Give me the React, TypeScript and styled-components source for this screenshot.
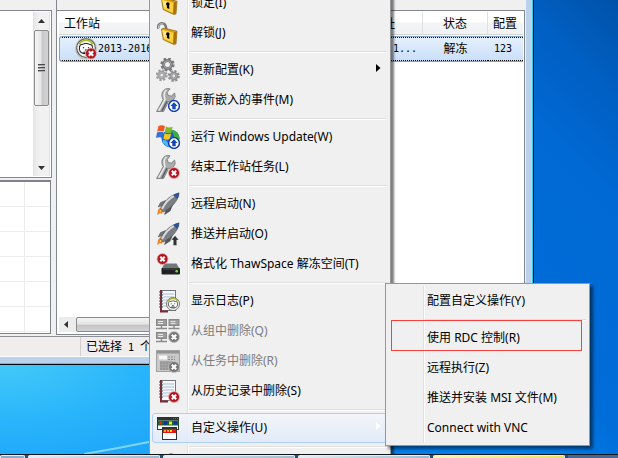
import React from "react";
import styled, { createGlobalStyle, css } from "styled-components";

const GlobalStyle = createGlobalStyle`
  *, *::before, *::after { box-sizing: border-box; }
  html, body { margin: 0; padding: 0; }
  body { overflow: hidden; }
  button { font: inherit; color: inherit; }
`;

const listFont = `"DejaVu Sans Mono", "Noto Sans CJK SC", monospace`;
const menuFont = `"Noto Sans CJK SC", "Noto Sans", sans-serif`;

/* ---------- desktop ---------- */

const Desktop = styled.div`
  position: relative;
  display: flex;
  flex-direction: column;
  height: 100vh;
  overflow: hidden;
  background:
    radial-gradient(ellipse 420px 190px at 0 78%, #45cbf8 0%, #28b4fb 35%, #1a9ff8 70%, rgba(18, 150, 245, 0) 100%),
    linear-gradient(225deg, #0052a8 0%, #005ec0 8%, #0069d4 19%, #006dd8 40%, #0080ee 50%);
`;

const Streak = styled.svg`
  position: absolute;
  left: 84px;
  bottom: 3px;
  width: 70px;
  height: 16px;
`;

const Taskbar = styled.div`
  position: relative;
  z-index: 3;
  display: flex;
  gap: 3px;
  height: 4px;
  border-top: 1px solid #10151c;
  background: #24506e;
`;

const Task = styled.div<{ $tone?: "plain" | "active" | "cut" }>`
  flex: 0 0 ${(p) => (p.$tone === "cut" ? "25px" : "132px")};
  border: 1px solid #e4f0f6;
  border-bottom: 0;
  border-radius: 2px 2px 0 0;
  background: ${(p) =>
    p.$tone === "active"
      ? "linear-gradient(90deg, #fbf6b0, #ecdf5c)"
      : p.$tone === "cut"
        ? "#86aec6"
        : "linear-gradient(90deg, #e8eef2, #9dbacb)"};
`;

const TaskRest = styled.div`
  flex: 1;
  background: #44688f;
`;

/* ---------- console window ---------- */

const Window = styled.div`
  flex: 1;
  min-height: 0;
  display: flex;
  flex-direction: column;
  margin: 0 86px 91px 0;
  border: solid #b9d1ea;
  border-width: 0 6px 6px 0;
  outline: 1px solid #2fd3ee;
  box-shadow: 0 0 0 2px #05080c;
  background: #f0f0f0;
  font: 12px/14px ${listFont};
  color: #000;
`;

const Panes = styled.div`
  flex: 1;
  min-height: 0;
  display: flex;
  gap: 4px;
`;

const SideColumn = styled.div`
  flex: 0 0 52px;
  display: flex;
  flex-direction: column;
  gap: 2px;
  padding: 10px 0 2px;
`;

const TreePane = styled.div`
  flex: 1;
  display: flex;
  justify-content: flex-end;
  padding: 1px;
  border: solid #828790;
  border-width: 1px 1px 1px 0;
  background: #fff;
`;

const GridPane = styled.div`
  flex: 0 0 154px;
  margin-right: 1px;
  border: solid #7d828b;
  border-width: 2px 1px 1px 0;
  background:
    linear-gradient(#ececec, #ececec) 24px 0 / 1px 100% no-repeat,
    repeating-linear-gradient(#fff 0 24px, #ececec 24px 25px);
`;

const ListColumn = styled.div`
  flex: 1;
  min-width: 0;
  display: flex;
  flex-direction: column;
  padding: 0 1px 1px 0;
`;

const ListTop = styled.div`
  height: 10px;
  border-left: 1px solid #828790;
`;

const ListPane = styled.div`
  flex: 1;
  display: flex;
  flex-direction: column;
  justify-content: space-between;
  padding: 1px 1px 2px 2px;
  border: 1px solid #828790;
  background: #fff;
`;

const VScroll = styled.div`
  display: flex;
  flex-direction: column;
  align-items: center;
  width: 17px;
  padding: 7px 0 6px;
  border: solid #e3e3e3;
  border-width: 0 1px;
  background: linear-gradient(90deg, #e8e8e8, #f1f1f1 40%, #f1f1f1);
`;

const VThumb = styled.div`
  display: flex;
  flex-direction: column;
  align-items: center;
  justify-content: center;
  gap: 1px;
  width: 15px;
  height: 76px;
  margin: 7px 0 auto;
  border: 1px solid #8b8b8b;
  border-radius: 2px;
  background: linear-gradient(90deg, #f5f5f5, #e6e6e6 45%, #c8c8cb 55%, #d4d4d6);
`;

const Grip = styled.i`
  width: 7px;
  height: 2px;
  border-top: 1px solid #4a4a4a;
  background: #aaa;
`;

const HScroll = styled.div`
  display: flex;
  align-items: center;
  gap: 8px;
  height: 15px;
  padding: 0 30px 0 5px;
  background: #ececec;
`;

const HThumb = styled.div`
  flex: 1;
  height: 15px;
  border: 1px solid #8b8b8b;
  border-radius: 2px;
  background: linear-gradient(#f5f5f5, #e2e2e2 48%, #c4c4c6 55%, #d4d4d6);
`;

const StationTable = styled.table`
  width: 100%;
  table-layout: fixed;
  border-collapse: separate;
  border-spacing: 0;
`;

const HeadCell = styled.th<{ $align?: string }>`
  height: 23px;
  padding: 1px 5px 0;
  text-align: ${(p) => p.$align || "left"};
  font-weight: 400;
  white-space: nowrap;
  border-right: 1px solid #dfe0e3;
  border-bottom: 1px solid #d5d5d5;
  background: linear-gradient(#fff 45%, #f3f4f5 50%, #f1f2f4);
  &:nth-child(2) { padding-right: 27px; }
  &:last-child { border-right: 0; }
`;

const Spacer = styled.tr`
  height: 1px;
`;

const BodyCell = styled.td<{ $align?: string }>`
  height: 25px;
  padding: 0 6px;
  text-align: ${(p) => p.$align || "left"};
  white-space: nowrap;
  font-size: ${(p) => (p.$align === "center" ? "12px" : "10px")};
  border: solid #7da2ce;
  border-width: 1px 0;
  background:
    repeating-linear-gradient(90deg, #000 0 1px, transparent 1px 2px) 0 0 / 100% 1px no-repeat,
    repeating-linear-gradient(90deg, #000 0 1px, transparent 1px 2px) 0 100% / 100% 1px no-repeat,
    linear-gradient(#e6f0fc, #c9dffa);
  &:first-child { border-left-width: 1px; border-radius: 3px 0 0 3px; }
`;

const Station = styled.div`
  display: flex;
  align-items: center;
  padding-left: 8px;
`;

const StatusBar = styled.div`
  display: flex;
  height: 21px;
  border-top: 1px solid #8b9096;
  border-bottom: 1px solid #fff;
  background: #f1edec;
`;

const StatusText = styled.div`
  margin-left: 80px;
  padding: 3px 5px;
  border-left: 1px solid #d2cecd;
  white-space: pre;
`;

const Count = styled.span`
  font-size: 10px;
`;

/* ---------- menus ---------- */

const Menu = styled.div<{ $sub?: boolean }>`
  position: absolute;
  z-index: ${(p) => (p.$sub ? 4 : 2)};
  left: ${(p) => (p.$sub ? 385 : 149)}px;
  top: ${(p) => (p.$sub ? 283 : -15)}px;
  width: ${(p) => (p.$sub ? 205 : 242)}px;
  padding: 2px;
  border: 1px solid #979797;
  background:
    linear-gradient(90deg, #e0e1e1 50%, #fff 50%) 37px 2px / 2px calc(100% - 4px) no-repeat,
    #f0f0f0;
  box-shadow: ${(p) => (p.$sub ? "3px 3px 3px" : "3px 2px 2px")} rgba(0, 0, 0, 0.5);
  font: 12px/16px ${menuFont};
  color: #000;
`;

const Item = styled.button<{ $open?: boolean }>`
  display: flex;
  align-items: center;
  width: 100%;
  height: 30px;
  padding: 0 6px 0 3px;
  border: 1px solid transparent;
  border-radius: 3px;
  background: none;
  text-align: left;
  white-space: pre;
  &:disabled { color: #7c7c7c; }
  ${(p) =>
    p.$open &&
    css`
      border-color: #aecff7;
      background: linear-gradient(rgba(243, 246, 251, 0.8), rgba(222, 234, 250, 0.8));
    `}
`;

const IconBox = styled.span`
  flex: 0 0 24px;
  height: 24px;
  margin-right: 11px;
  svg { display: block; }
`;

const Label = styled.span`
  flex: 1;
  padding-bottom: 2px;
`;

const Latin = styled.span`
  font-family: "Noto Sans", sans-serif;
`;

const ArrowSlot = styled.span`
  padding-bottom: 4px;
  svg { display: block; }
`;

const Rule = styled.hr`
  height: 2px;
  margin: 3px 1px 2px 37px;
  border: 0;
  border-top: 1px solid #dedede;
  background: #fff;
`;

const NextIcon = styled.div`
  height: 5px;
  padding: 2px 0 0 14px;
  svg { display: block; }
`;

const Highlight = styled.div`
  position: absolute;
  z-index: 5;
  left: 391px;
  top: 320px;
  width: 191px;
  height: 31px;
  border: 1px solid #f8403c;
  pointer-events: none;
`;

/* ---------- drawings ---------- */

function Arrow({ dir, color = "#000" }: { dir: "up" | "down" | "left" | "right"; color?: string }) {
  const d = {
    up: "M0 4 L3.5 0 L7 4Z",
    down: "M0 0 L7 0 L3.5 4Z",
    left: "M4 0 L4 7 L0 3.5Z",
    right: "M0 0 L4.5 4 L0 8Z",
  }[dir];
  const [w, h] = dir === "right" ? [5, 8] : dir === "left" ? [4, 7] : [7, 4];
  return (
    <svg width={w} height={h} viewBox={`0 0 ${w} ${h}`}>
      <path d={d} fill={color} />
    </svg>
  );
}

const Cross = ({ x = 18, y = 18, gray = false }) => (
  <g transform={`translate(${x} ${y})`}>
    <circle r="5.5" fill={gray ? "#777" : "#b3151f"} stroke={gray ? "#c4c4c4" : "#e9b9bb"} strokeWidth=".8" />
    <path d="M-2.2-2.2 2.2 2.2M2.2-2.2-2.2 2.2" stroke="#fff" strokeWidth="2.1" />
  </g>
);

const UpBadge = () => (
  <g transform="translate(18 18)">
    <circle r="5.4" fill="#fff" stroke="#133fa8" strokeWidth="1.5" />
    <path d="M0-3.8 3.6 0H1.7V3.2H-1.7V0H-3.6Z" fill="#1746b8" />
  </g>
);

const Bear = ({ x = 17, y = 15, r = 6.5 }) => (
  <g transform={`translate(${x} ${y}) scale(${r / 6.5})`}>
    <circle r="6.5" fill="#f4f4f0" stroke="#5c5c58" strokeWidth=".8" />
    <path d="M-4.8-2.6A5.4 5.4 0 0 1 4.8-2.6" stroke="#a8b82a" strokeWidth="1.3" fill="none" />
    <path d="M-4.6 1C-4.8-2-3.8-2.4-2.8-2.4Q0-4 2.8-2.4C3.8-2.4 4.8-2 4.6 1 4 5-4 5-4.6 1Z" fill="#fff" stroke="#222" strokeWidth=".7" />
    <path d="M-2.2-.2h.9M1.3-.2h.9M-.8 1.4h1.6M-1.8 3h3.6" stroke="#111" strokeWidth=".8" />
  </g>
);

const Wrench = () => (
  <g>
    <path
      d="M.6 23.5 7.2 11.5C4.6 7.5 5.7 1.8 11.2.4L14 .8 11.2 4.4 12.3 7.6 15.5 8 18.6 5 19.2 8.6C17.8 12.6 14.9 13.8 12.5 13.4L7.6 23.5Z"
      fill="#a9abad"
      stroke="#707274"
      strokeWidth=".8"
    />
    <path d="M2.8 22.7 9 11.5C7.6 7.5 7.8 4 10.5 2" fill="none" stroke="#ececec" strokeWidth="1.5" />
    <path d="M6 22.8 11 13" stroke="#5f6265" strokeWidth="1.5" />
  </g>
);

const Rocket = () => (
  <g>
    <path d="M1.2 23 2.2 17.6 5 15 9 19 6.5 20.5 5.4 22 4.4 20.7Z" fill="#f57c22" />
    <path d="M3.5 20 5 16.5 7 18.5Z" fill="#ffdf66" />
    <path d="M9.5 8.5 4.5 10.5 2.2 15 8 13.2Z" fill="#74787d" stroke="#4c5055" strokeWidth=".5" />
    <path d="M16.5 13.2 14 19 8.6 22.5 10.6 16.3Z" fill="#54585d" stroke="#34383d" strokeWidth=".5" />
    <path d="M4.5 17.5C7 10 13.5 3.5 22.8 1 22.8 8.5 15 16.5 7.4 19.8Z" fill="#7b7f84" stroke="#484c50" strokeWidth=".6" />
    <path d="M6 17C9 10.8 13 6.5 18 3.8" fill="none" stroke="#d9dcde" strokeWidth="2" />
    <path d="M17 3.1Q20 1.2 23.3.6 23.4 4 21.4 7.2Z" fill="#2f5598" />
  </g>
);

const Journal = () => (
  <g>
    <rect x="4.5" y="1.5" width="15" height="20" fill="#f6f8fb" stroke="#73777c" />
    <path d="M7 5h11M7 8h11M7 11h11M7 14h11M7 17h11" stroke="#a9bad3" />
    <path d="M5 1V22.5H12" fill="none" stroke="#832832" strokeWidth="2" />
    <path d="M3 3h4M3 6h4M3 9h4M3 12h4M3 15h4M3 18h4" stroke="#444a52" strokeWidth="1" />
  </g>
);

const Padlock = ({ open = false }) => (
  <g>
    <path
      d={open ? "M2.6 7.5C1 4 4.8 1.3 7.6 2.6 10 3.8 10.3 6 10.3 9" : "M9 10C8 5 10 2 14 3 17 4 17 8 17 11"}
      fill="none"
      stroke="#77797c"
      strokeWidth="2.6"
    />
    <path d={open ? "M2.6 7C1.8 4 4.6 2 7.4 3" : "M9 9C8.5 5 10 3 13 3.3"} fill="none" stroke="#cfd1d3" strokeWidth="1" />
    <path d="M5.5 8 8.5 7.2 21 10.2 20 23 17.6 23.4 7.2 18.6Z" fill="#dd9c0e" stroke="#876210" strokeWidth=".7" />
    <path d="M6.2 8.7 17.6 11.7 16.8 22 7.9 18Z" fill="#ffd33d" />
    <path d="M6.5 9.5 11 10.6 8.4 17.6Z" fill="#ffe98e" />
    <path d="M17.8 11.6 20.3 10.8 19.5 22.5 17.3 22.9Z" fill="#a96f05" />
    <circle cx="11.8" cy="13" r="1.8" />
    <path d="M11 13h2l.4 5-2.4-1Z" />
  </g>
);

const Gear = ({ x, y, r, c }: { x: number; y: number; r: number; c: string }) => (
  <g transform={`translate(${x} ${y})`} fill="none">
    <circle r={r} stroke={c} strokeWidth="2.2" strokeDasharray={`${r * 0.44} ${r * 0.345}`} />
    <circle r={r - 2} stroke={c} strokeWidth="3" />
    <circle r={r - 2.2} stroke="#c6c6c6" strokeWidth=".6" />
  </g>
);

const Computer = ({ x, y }: { x: number; y: number }) => (
  <g transform={`translate(${x} ${y})`}>
    <rect x=".5" y=".5" width="10" height="6" fill="#9c9c9c" stroke="#888" />
    <path d="M2 2.5h5M2 4.5h5" stroke="#e8e8e8" />
    <path d="M5.5 7v2M0 9.5h11" stroke="#8b8b8b" strokeWidth="1.4" />
  </g>
);

const drawings: Record<string, React.ReactNode> = {
  lock: <Padlock />,
  unlock: <Padlock open />,
  gears: (
    <>
      <Gear x={11.5} y={6.5} r={6} c="#747678" />
      <Gear x={5.7} y={17.2} r={4.9} c="#9b9d9f" />
      <Gear x={17.8} y={18} r={4.9} c="#8b8d8f" />
    </>
  ),
  wrenchUp: <><Wrench /><UpBadge /></>,
  windows: (
    <>
      <circle cx="14.5" cy="13.5" r="9" fill="#1668c9" />
      <path d="M15 5C20 5 24 9 23.5 14 20 15 18 13 18 10Z" fill="#3fae3b" />
      <path d="M7 15Q10 14 12 18L13 22Q8 20 6.5 17Z" fill="#52b3ee" />
      <path d="M2.5 1Q5.5-.5 9 1L7.8 6.6Q4.8 5.2 1.2 6.6Z" fill="#ea5a23" />
      <path d="M10 1.5Q13 3.4 16.7 1.8L15.2 7.6Q12 9 8.8 7Z" fill="#7dbb2a" />
      <path d="M1 7.6Q4.5 6 7.6 7.6L6.4 13Q3.2 11.6 0 13Z" fill="#3472d2" />
      <path d="M8.6 8Q11.6 10 15 8.6L13.8 14Q10.5 15.6 7.4 13.4Z" fill="#f8c421" />
      <UpBadge />
    </>
  ),
  wrenchStop: <><Wrench /><Cross /></>,
  rocket: <Rocket />,
  rocketUp: (
    <>
      <Rocket />
      <path d="M19 13.5 23 18H20.8V23.5H17.2V18H15Z" fill="#303236" stroke="#f0f0f0" strokeWidth=".5" />
    </>
  ),
  drive: (
    <>
      <path d="M8.5 11.5H20.5L23.8 17H5.5Z" fill="#74777a" />
      <rect x="5.5" y="16" width="18.5" height="6.5" rx="1.2" fill="#1f2123" />
      <path d="M7 17h15.5" stroke="#5c5f62" strokeWidth=".8" />
      <circle cx="20.7" cy="19.3" r="1.3" fill="#7be03a" />
      <Cross x={6.5} y={7} />
    </>
  ),
  log: <><Journal /><Bear /></>,
  group: (
    <>
      <Computer x={0} y={0} />
      <Computer x={12.5} y={0} />
      <Computer x={0} y={13} />
      <Cross gray />
    </>
  ),
  task: (
    <>
      <rect x=".5" y="1.5" width="23" height="21" fill="#c9c9c9" stroke="#a0a0a0" />
      <rect x="1" y="2" width="22" height="2.5" fill="#949494" />
      <rect x="3" y="6.5" width="8" height="4" fill="#f6f6f6" />
      <rect x="4" y="12" width="15" height="9" fill="#a4a4a4" />
      <path d="M12 8h7M12 10.5h7M4 14h15M4 17h10M4 20h9" stroke="#8a8a8a" strokeDasharray="2 1" />
      <Cross gray />
    </>
  ),
  history: <><Journal /><Cross /></>,
  custom: (
    <>
      <rect x="1.5" y="1.5" width="21" height="12" fill="#fff" stroke="#333" />
      <rect x="1" y="1" width="22" height="3.5" fill="#303030" />
      <path d="M17 2.5h1M19 2.5h1M21 2.5h1" stroke="#e33" />
      <rect x="2" y="4.5" width="21" height="5" fill="#13642f" />
      <path d="M3 5.5h3v3H3z" fill="#f11b17" />
      <path d="M8 5.5h3v3H8zM18 5.5h3v3H18z" fill="#1c28ae" />
      <path d="M13 5.5h3v3H13z" fill="#f3e611" />
      <rect x="6.5" y="11.5" width="14" height="12" fill="#fff" stroke="#333" />
      <rect x="6" y="11" width="15" height="2" fill="#303030" />
      <rect x="7" y="13" width="13" height="4" fill="#e8150f" />
      <path d="M8 14h2v2H8zM11 14h2v2h-2z" fill="#f7a414" />
      <path d="M14 14h2v2h-2z" fill="#f7df14" />
    </>
  ),
};

/* ---------- content ---------- */

type Entry = { label: string; icon?: string; arrow?: boolean; off?: boolean; open?: boolean } | null;

const mainEntries: Entry[] = [
  { label: "锁定(I)", icon: "lock" },
  { label: "解锁(J)", icon: "unlock" },
  null,
  { label: "更新配置(K)", icon: "gears", arrow: true },
  { label: "更新嵌入的事件(M)", icon: "wrenchUp" },
  null,
  { label: "运行 Windows Update(W)", icon: "windows" },
  { label: "结束工作站任务(L)", icon: "wrenchStop" },
  null,
  { label: "远程启动(N)", icon: "rocket" },
  { label: "推送并启动(O)", icon: "rocketUp" },
  { label: "格式化 ThawSpace 解冻空间(T)", icon: "drive" },
  null,
  { label: "显示日志(P)", icon: "log" },
  { label: "从组中删除(Q)", icon: "group", off: true },
  { label: "从任务中删除(R)", icon: "task", off: true },
  { label: "从历史记录中删除(S)", icon: "history" },
  null,
  { label: "自定义操作(U)", icon: "custom", arrow: true, open: true },
  null,
];

const subEntries: Entry[] = [
  { label: "配置自定义操作(Y)" },
  null,
  { label: "使用 RDC 控制(R)" },
  { label: "远程执行(Z)" },
  { label: "推送并安装 MSI 文件(M)" },
  { label: "Connect with VNC" },
];

function MenuLabel({ text }: { text: string }) {
  const parts = text.split(/([ -~]+)/).filter(Boolean);
  return (
    <Label>
      {parts.map((part, i) => (/^[ -~]/.test(part) ? <Latin key={i}>{part}</Latin> : part))}
    </Label>
  );
}

function Entries({ entries }: { entries: Entry[] }) {
  return (
    <>
      {entries.map((e, i) =>
        e === null ? (
          <Rule key={i} />
        ) : (
          <Item key={i} type="button" role="menuitem" disabled={e.off} $open={e.open}>
            <IconBox>
              {e.icon && (
                <svg width="24" height="24" viewBox="0 0 24 24">
                  {drawings[e.icon]}
                </svg>
              )}
            </IconBox>
            <MenuLabel text={e.label} />
            {e.arrow && (
              <ArrowSlot>
                <Arrow dir="right" color={e.open ? "#fff" : "#000"} />
              </ArrowSlot>
            )}
          </Item>
        ),
      )}
    </>
  );
}

export default function App() {
  return (
    <Desktop>
      <GlobalStyle />
      <Streak viewBox="0 0 70 16">
        <path d="M0 15Q36 9 70 2" fill="none" stroke="#7fd6fb" strokeWidth="2" />
      </Streak>

      <Window>
        <Panes>
          <SideColumn>
            <TreePane>
              <VScroll>
                <Arrow dir="up" color="#333" />
                <VThumb>
                  <Grip />
                  <Grip />
                  <Grip />
                </VThumb>
                <Arrow dir="down" color="#333" />
              </VScroll>
            </TreePane>
            <GridPane />
          </SideColumn>
          <ListColumn>
            <ListTop />
            <ListPane>
              <StationTable>
                <colgroup>
                  <col />
                  <col width="100" />
                  <col width="65" />
                  <col width="35" />
                </colgroup>
                <thead>
                  <tr>
                    <HeadCell>工作站</HeadCell>
                    <HeadCell $align="right">地址</HeadCell>
                    <HeadCell $align="center">状态</HeadCell>
                    <HeadCell>配置</HeadCell>
                  </tr>
                </thead>
                <tbody>
                  <Spacer />
                  <tr>
                    <BodyCell>
                      <Station>
                        <svg width="24" height="24" viewBox="0 0 24 24">
                          <circle cx="12" cy="11.5" r="11" fill="#c4c6c4" />
                          <Bear x={12} y={11} r={9.3} />
                          <Cross x={17} y={16.5} />
                        </svg>
                        2013-2016
                      </Station>
                    </BodyCell>
                    <BodyCell $align="right">168.1...</BodyCell>
                    <BodyCell $align="center">解冻</BodyCell>
                    <BodyCell>123</BodyCell>
                  </tr>
                </tbody>
              </StationTable>
              <HScroll>
                <Arrow dir="left" color="#333" />
                <HThumb />
              </HScroll>
            </ListPane>
          </ListColumn>
        </Panes>
        <StatusBar>
          <StatusText>
            已选择<Count> 1 </Count>个
          </StatusText>
        </StatusBar>
      </Window>

      <Menu role="menu">
        <Entries entries={mainEntries} />
        <NextIcon>
          <svg width="10" height="4" viewBox="0 0 10 4">
            <path d="M1 4Q5-2 9 4Z" fill="#8c8c8c" />
          </svg>
        </NextIcon>
      </Menu>

      <Menu role="menu" $sub>
        <Entries entries={subEntries} />
      </Menu>
      <Highlight />

      <Taskbar>
        <Task $tone="cut" />
        <Task />
        <Task />
        <Task />
        <Task $tone="active" />
        <TaskRest />
      </Taskbar>
    </Desktop>
  );
}
